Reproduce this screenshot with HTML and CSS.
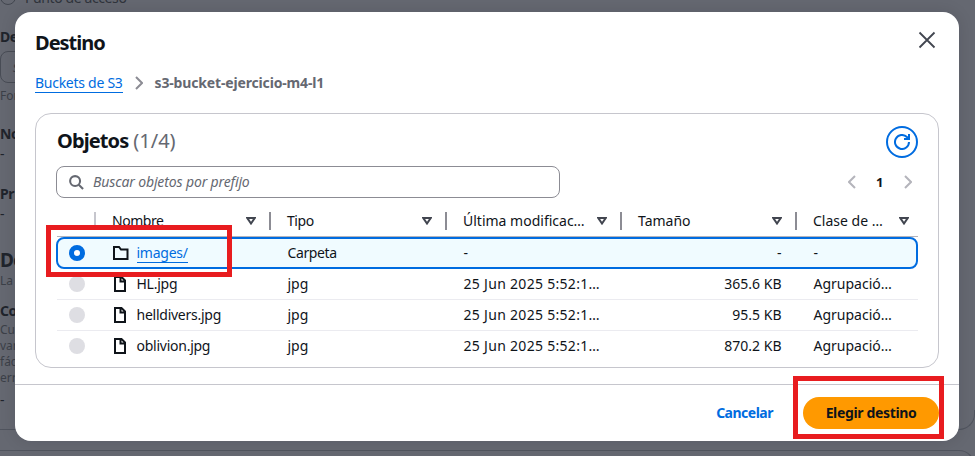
FILE: index.html
```html
<!DOCTYPE html>
<html lang="es">
<head>
<meta charset="utf-8">
<title>Destino</title>
<link rel="stylesheet" href="styles.css">
</head>
<body>
<svg class="defs" aria-hidden="true">
  <symbol id="folder" viewBox="0 0 16 16"><path d="M1 2h5l2 2.500h6.500V14H1z"/></symbol>
  <symbol id="file" viewBox="0 0 16 16"><path d="M2 1h6.500L12 4.500V15H2zM7.500 1v4.500H12"/></symbol>
  <symbol id="sort" viewBox="0 0 10 8"><path d="M1.300 1.100h7.400L5 6.500z"/></symbol>
</svg>
<div class="page">
  <div class="option"><i class="circle"></i><span>Punto de acceso</span></div>
  <b class="label dest">De</b>
  <div class="field">s</div>
  <p class="hint format">For</p>
  <b class="label">No</b><p class="dash first">-</p>
  <b class="label prefix">Pr</b><p class="dash second">-</p>
  <h2 class="details">De</h2>
  <p class="hint la">La</p>
  <b class="label config">Co</b>
  <p class="hint">Cu</p><p class="hint">var</p><p class="hint">fác</p><p class="hint">err</p>
  <p class="dash last">-</p>
  <div class="panel-end"></div>
  <div class="panel-start"></div>
</div>
<main class="modal">
  <header class="modal-head">
    <h1>Destino</h1>
    <svg class="close" viewBox="0 0 18 18"><path d="M1.500 1.500l15 15M16.500 1.500l-15 15"/></svg>
  </header>
  <nav class="crumbs">
    <a class="crumb-link">Buckets de S3</a>
    <svg class="crumb-arrow" viewBox="0 0 8 14"><path d="M1 1l6 6-6 6"/></svg>
    <b class="current">s3-bucket-ejercicio-m4-l1</b>
  </nav>
  <section class="card">
    <div class="card-head">
      <h2 class="title">Objetos</h2><span class="count">(1/4)</span>
      <div class="refresh"><svg viewBox="0 0 16 16"><path d="M15 8a7 7 0 1 1-2.100-5L15 5.100M15 0v5h-5"/></svg></div>
    </div>
    <div class="tools">
      <div class="search">
        <svg viewBox="0 0 16 16"><circle cx="6.500" cy="6.500" r="5.300"/><path d="M10.400 10.400L15 15"/></svg>
        <span>Buscar objetos por prefijo</span>
      </div>
      <div class="pager">
        <svg viewBox="0 0 8 14"><path d="M7 1L1 7l6 6"/></svg>
        <b>1</b>
        <svg viewBox="0 0 8 14"><path d="M1 1l6 6-6 6"/></svg>
      </div>
    </div>
    <div class="row head">
      <div></div>
      <div class="cell th pale"><span class="tight">Nombre</span><svg><use href="#sort"/></svg></div>
      <div class="cell th"><span class="tight">Tipo</span><svg><use href="#sort"/></svg></div>
      <div class="cell th"><span>Última modificac…</span><svg><use href="#sort"/></svg></div>
      <div class="cell th"><span>Tamaño</span><svg><use href="#sort"/></svg></div>
      <div class="cell th end"><span>Clase de …</span><svg><use href="#sort"/></svg></div>
    </div>
    <div class="row selected">
      <div><i class="radio on"></i></div>
      <div class="cell name"><svg class="icon"><use href="#folder"/></svg><a class="link">images/</a></div>
      <div class="cell carpet">Carpeta</div><div class="cell">-</div><div class="cell num">-</div><div class="cell">-</div>
    </div>
    <div class="row">
      <div><i class="radio"></i></div>
      <div class="cell name"><svg class="icon"><use href="#file"/></svg>HL.jpg</div>
      <div class="cell">jpg</div><div class="cell date">25 Jun 2025 5:52:1…</div><div class="cell num">365.6 KB</div><div class="cell">Agrupació…</div>
    </div>
    <div class="row">
      <div><i class="radio"></i></div>
      <div class="cell name"><svg class="icon"><use href="#file"/></svg>helldivers.jpg</div>
      <div class="cell">jpg</div><div class="cell date">25 Jun 2025 5:52:1…</div><div class="cell num">95.5 KB</div><div class="cell">Agrupació…</div>
    </div>
    <div class="row final">
      <div><i class="radio"></i></div>
      <div class="cell name"><svg class="icon"><use href="#file"/></svg>oblivion.jpg</div>
      <div class="cell">jpg</div><div class="cell date">25 Jun 2025 5:52:1…</div><div class="cell num">870.2 KB</div><div class="cell">Agrupació…</div>
    </div>
  </section>
  <footer class="actions">
    <b class="cancel">Cancelar</b>
    <b class="choose">Elegir destino</b>
  </footer>
</main>
<div class="mark mark-folder"></div>
<div class="mark mark-choose"></div>
</body>
</html>
```
FILE: styles.css
```css
* { box-sizing: border-box; }
body { margin: 0; width: 975px; height: 456px; overflow: hidden; position: relative; background: #656871; font: 14px/20px "Noto Sans", sans-serif; color: #0f141a; }
h1, h2, p { margin: 0; }
svg { fill: none; stroke: currentColor; flex: none; }
.defs { position: absolute; width: 0; height: 0; }
b { font-weight: 700; }

.page { height: 456px; overflow: hidden; display: flex; flex-direction: column; color: #20242c; }
.page > * { flex: none; }
.option { display: flex; height: 27px; gap: 9px; color: #30343c; font-size: 14px; letter-spacing: -.4px; line-height: 16px; margin-top: -11px; }
.circle { width: 16px; height: 16px; border: 1px solid #42464f; border-radius: 50%; }
.option span { margin-top: 1px; }
.dest { margin-top: 11px; }
.label { height: 20px; letter-spacing: -.5px; }
.field { width: 900px; height: 32px; border: 1px solid #484c55; border-radius: 8px; margin-top: 4px; padding: 5px 12px; font-style: italic; color: #3d414a; }
.hint { height: 16px; font-size: 12px; line-height: 16px; color: #3c4048; }
.format { margin: 5px 0 20px; }
.dash { height: 20px; }
.prefix { margin-top: 20px; }
.details { font-size: 19px; line-height: 24px; letter-spacing: -1px; margin-top: 24px; }
.la { margin-top: 1px; }
.config { margin: 12px 0 1px; }
.last { margin-top: 4px; }
.panel-end { height: 20px; border-bottom: 1px solid #50545e; border-right: 1px solid #50545e; border-radius: 0 0 16px 0; }
.panel-start { margin-top: 20px; height: 30px; border: solid #50545e; border-width: 1px 1px 0 0; border-radius: 0 16px 0 0; }

.modal { position: absolute; left: 15px; top: 12px; width: 944px; height: 429px; border-radius: 16px; background: #fff; display: flex; flex-direction: column; box-shadow: 0 0 16px rgba(0,7,22,.12); }
.modal-head { display: flex; justify-content: space-between; padding: 19px 23px 0 20px; height: 61px; }
h1 { font-size: 20px; line-height: 24px; letter-spacing: -1px; }
.close { width: 18px; height: 18px; stroke: #424650; stroke-width: 1.800; }
.crumbs { display: flex; align-items: center; padding-left: 20px; height: 20px; color: #656871; }
.crumb-link { color: #006ce0; line-height: 18px; border-bottom: 1px solid; letter-spacing: -.27px; }
.crumb-arrow { width: 8px; height: 14px; stroke: #8c8c94; stroke-width: 2; margin: 0 12px; }
.current { letter-spacing: -.16px; }
.card { margin: 20px 20px 0; height: 255px; border: 1px solid #c6c6cd; border-radius: 16px; padding: 12px 20px 0 21px; }
.card-head { display: flex; align-items: center; height: 32px; }
.title { font-size: 20px; line-height: 24px; letter-spacing: -.9px; margin-top: -2px; }
.count { color: #656871; font-size: 20px; margin: -2px 0 0 5px; }
.refresh { margin-left: auto; width: 32px; height: 32px; border: 2px solid #006ce0; border-radius: 50%; color: #006ce0; display: grid; place-items: center; }
.refresh svg { width: 16px; height: 16px; stroke-width: 2; }
.tools { display: flex; justify-content: space-between; padding-top: 8px; height: 51px; margin-left: -1px; }
.search { display: flex; align-items: center; width: 504px; height: 32px; border: 1px solid #8c8c94; border-radius: 8px; padding-left: 12px; color: #656871; font-style: italic; letter-spacing: -.13px; }
.search svg { width: 15px; height: 15px; stroke-width: 2.200; margin-right: 9px; }
.pager { display: flex; height: 32px; align-items: center; gap: 20px; padding-right: 6px; }
.pager b { width: 8px; font-size: 13px; }
.pager svg { width: 8px; height: 14px; stroke: #b4b4bb; stroke-width: 2; }

.row { display: grid; grid-template-columns: 38px 175px 176px 175px 175px 122px; height: 31px; border-bottom: 1px solid #ebebf0; align-items: center; }
.head { height: 28px; border-bottom: 1px solid #b4b4bb; }
.cell { display: flex; align-items: center; padding-left: 17.500px; white-space: nowrap; }
.th { justify-content: space-between; height: 18px; border-left: 2px solid #8c8c94; padding-left: 16px; padding-right: 14px; margin-top: -4px; margin-left: -1px; }
.pale { border-color: #c6c6cd; }
.end { padding-right: 9px; }
.th svg { width: 10px; height: 8px; color: #424650; stroke-width: 2; }
.tight { letter-spacing: -.45px; }
.selected { height: 32px; border: 2px solid #006ce0; border-radius: 8px; background: #f0fbff; margin: 0 0 0 -1px; grid-template-columns: 37px 175px 176px 175px 175px 119px; }
.final { height: 30px; border: 0; }
.name { letter-spacing: -.25px; }
.carpet { letter-spacing: -.4px; }
.date { letter-spacing: .3px; }
.num { justify-content: flex-end; padding-right: 14.500px; }
.icon { width: 16px; height: 16px; margin-right: 8px; stroke-width: 2; }
.link { color: #006ce0; line-height: 18px; border-bottom: 1px solid; }
.radio { display: block; width: 16px; height: 16px; border-radius: 50%; background: #dedee3; margin-left: 12px; }
.selected .radio { margin-left: 11px; }
.radio.on { border: 5px solid #006ce0; background: #fff; }

.actions { display: flex; justify-content: flex-end; align-items: center; gap: 30px; height: 57px; margin-top: 16px; border-top: 1px solid #c6c6cd; padding-right: 20px; }
.cancel { color: #006ce0; letter-spacing: -.5px; }
.choose { width: 136px; height: 32px; line-height: 32px; text-align: center; background: #ff9900; border-radius: 16px; letter-spacing: -.35px; }
.mark { position: absolute; border: 5px solid #e81c1f; }
.mark-folder { left: 46px; top: 225px; width: 186px; height: 52px; }
.mark-choose { left: 793px; top: 376px; width: 151px; height: 63px; }
```
